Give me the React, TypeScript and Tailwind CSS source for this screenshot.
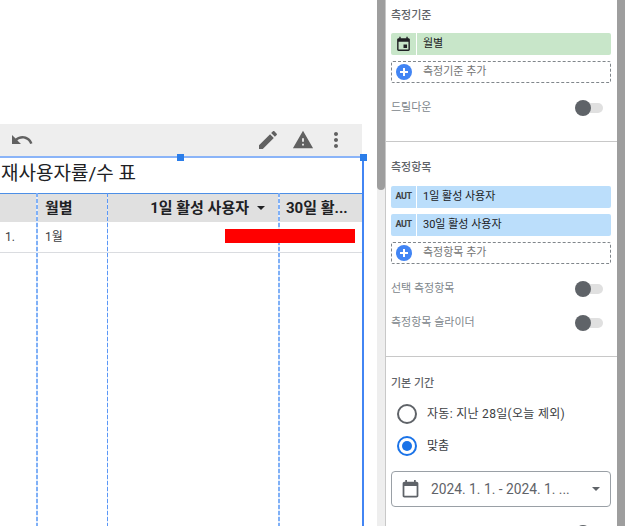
const FONT = "font-['Roboto','Noto_Sans_CJK_KR',sans-serif]";

function Icon({ d, size = 24, className = "" }: { d: string; size?: number; className?: string }) {
  return (
    <svg width={size} height={size} viewBox="0 0 24 24" className={"flex-none " + className} fill="currentColor">
      <path d={d} />
    </svg>
  );
}

const UNDO = "M12.5 8c-2.65 0-5.05.99-6.9 2.6L2 7v9h9l-3.62-3.62c1.39-1.16 3.16-1.88 5.12-1.88 3.54 0 6.55 2.31 7.6 5.5l2.37-.78C21.08 11.03 17.15 8 12.5 8z";
const EDIT = "M3 17.25V21h3.75L17.81 9.94l-3.75-3.75L3 17.25zM20.71 7.04c.39-.39.39-1.02 0-1.41l-2.34-2.34c-.39-.39-1.02-.39-1.41 0l-1.83 1.83 3.75 3.75 1.83-1.83z";
const WARN = "M1 21h22L12 2 1 21zm12-3h-2v-2h2v2zm0-4h-2v-4h2v4z";
const MORE = "M12 8c1.1 0 2-.9 2-2s-.9-2-2-2-2 .9-2 2 .9 2 2 2zm0 2c-1.1 0-2 .9-2 2s.9 2 2 2 2-.9 2-2-.9-2-2-2zm0 6c-1.1 0-2 .9-2 2s.9 2 2 2 2-.9 2-2-.9-2-2-2z";
const EVENT = "M17 12h-5v5h5v-5zM16 1v2H8V1H6v2H5c-1.11 0-1.99.9-1.99 2L3 19c0 1.1.89 2 2 2h14c1.1 0 2-.9 2-2V5c0-1.1-.9-2-2-2h-1V1h-2zm3 18H5V8h14v11z";
const CAL = "M19 3h-1V1h-2v2H8V1H6v2H5c-1.11 0-2 .9-2 2v14c0 1.1.89 2 2 2h14c1.1 0 2-.89 2-2V5c0-1.1-.9-2-2-2zm0 16H5V8h14v11z";

function Heading({ children, className = "" }: { children: string; className?: string }) {
  return <div className={"h-5 flex items-center px-[5px] text-[11px] font-medium text-[#5f6368] " + className}>{children}</div>;
}

function Chip({ bg, tag, icon, label, className = "" }: { bg: string; tag?: string; icon?: boolean; label: string; className?: string }) {
  return (
    <div className={"ml-[5px] mr-[6px] h-[22px] flex rounded-[2px] overflow-hidden " + bg + " " + className}>
      <div className="w-[26px] flex-none flex items-center justify-center border-r border-white">
        {icon ? (
          <Icon d={EVENT} size={17} className="text-[#202124]" />
        ) : (
          <span className="text-[9px] font-bold tracking-[-0.5px] text-[#3c4043]">{tag}</span>
        )}
      </div>
      <div className="pl-[6px] flex items-center text-[11px] text-[#202124]">{label}</div>
    </div>
  );
}

function AddRow({ label, className = "" }: { label: string; className?: string }) {
  return (
    <div className={"ml-[5px] mr-[6px] h-[22px] flex items-center border border-dashed border-[#80868b] rounded-[2px] " + className}>
      <div className="ml-[4px] w-4 h-4 rounded-full bg-[#4285f4] flex items-center justify-center relative">
        <div className="w-2 h-[2px] bg-white" />
        <div className="absolute w-[2px] h-2 bg-white" />
      </div>
      <span className="ml-[11px] text-[11px] text-[#757575]">{label}</span>
    </div>
  );
}

function ToggleRow({ label, className = "" }: { label: string; className?: string }) {
  return (
    <div className={"h-6 pl-[5px] pr-[14px] flex items-center justify-between text-[11px] text-[#80868b] " + className}>
      <span className="mt-[1px]">{label}</span>
      <Toggle />
    </div>
  );
}

function Toggle() {
  return (
    <div className="relative w-[28px] h-[16px] flex items-center">
      <div className="w-full h-[10px] ml-[2px] rounded-full bg-[#e0e0e0]" />
      <div className="absolute left-0 top-0 w-4 h-4 rounded-full bg-[#5f6368]" />
    </div>
  );
}

function Radio({ checked, children }: { checked?: boolean; children: React.ReactNode }) {
  return (
    <div className="h-8 pl-[11px] flex items-center">
      <div className={"w-5 h-5 rounded-full border-2 flex items-center justify-center " + (checked ? "border-[#1a73e8]" : "border-[#5f6368]")}>
        {checked && <div className="w-[10px] h-[10px] rounded-full bg-[#1a73e8]" />}
      </div>
      <div className="ml-[10px] text-[12px] text-[#3c4043]">{children}</div>
    </div>
  );
}

const DASH_WIDE = "absolute top-[35px] bottom-0 w-[2px] bg-[repeating-linear-gradient(to_bottom,#7fb0f7_0,#7fb0f7_4px,#e3edfd_4px,#e3edfd_6px)]";
const DASH_THIN = "absolute top-[35px] bottom-0 w-[1px] bg-[repeating-linear-gradient(to_bottom,#5a97f7_0,#5a97f7_4px,#dbe8fd_4px,#dbe8fd_6px)]";

function Table() {
  return (
    <div className="relative w-[364px] flex-1 border-t-2 border-t-[#8ab4f8] border-r-2 border-r-[#4285f4] bg-white">
      <div className="h-[35px] pl-[1px] pb-[2px] flex items-center text-[19px] text-[#202124] whitespace-nowrap">재사용자률/수 표</div>
      <div className="grid grid-cols-[37px_70px_171px_84px] h-[29px] bg-[#e0e0e0] border-t border-t-[#4d8fe6] text-[15px] font-bold text-[#202124]">
        <div />
        <div className="pl-2 flex items-center">월별</div>
        <div className="flex items-center justify-end pr-[13px]">
          <span>1일 활성 사용자</span>
          <span className="ml-[8px] w-0 h-0 border-x-[4px] border-x-transparent border-t-[4px] border-t-[#202124]" />
        </div>
        <div className="pl-2 flex items-center whitespace-nowrap overflow-hidden">30일 활...</div>
      </div>
      <div className="grid grid-cols-[37px_70px_171px_84px] h-[31px] border-b border-b-[#dadce0] text-[12px] text-[#3c4043]">
        <div className="pl-[5px] flex items-center">1.</div>
        <div className="pl-2 flex items-center">1월</div>
        <div />
        <div />
      </div>
      <div className={DASH_WIDE + " left-[36px]"} />
      <div className={DASH_THIN + " left-[107px]"} />
      <div className={DASH_WIDE + " left-[278px]"} />
      <div className="absolute left-[225px] top-[71px] w-[130px] h-[14px] bg-[#ff0000]" />
      <div className="absolute left-[177px] -top-[4px] w-[7px] h-[7px] bg-[#2b7de9]" />
      <div className="absolute left-[360px] -top-[4px] w-[7px] h-[7px] bg-[#2b7de9]" />
    </div>
  );
}

export default function App() {
  return (
    <div className={"w-[633px] h-[526px] flex overflow-hidden bg-white " + FONT}>
      <div className="w-[377px] flex-none pt-[124px] flex flex-col">
        <div className="w-[362px] h-[32px] bg-[#eeeeee] flex items-center pl-[10px] pr-[14px] text-[#616161]">
          <Icon d={UNDO} />
          <Icon d={EDIT} className="ml-auto" />
          <Icon d={WARN} size={22} className="ml-[12px]" />
          <Icon d={MORE} className="ml-[10px]" />
        </div>
        <Table />
      </div>

      <div className="w-[9px] flex-none bg-[#eeeeee] border-r border-r-[#c8c8c8]">
        <div className="w-[8px] h-[190px] bg-[#9e9e9e] rounded-b-[4px]" />
      </div>

      <div className="w-[231px] flex-none overflow-hidden">
        <Heading className="mt-[6px]">측정기준</Heading>
        <Chip bg="bg-[#c8e6c9]" icon label="월별" className="mt-[7px]" />
        <AddRow label="측정기준 추가" className="mt-[6px]" />
        <ToggleRow label="드릴다운" className="mt-[13px]" />
        <div className="mt-[21px] h-px bg-[#c8c8c8]" />
        <Heading className="mt-[16px]">측정항목</Heading>
        <Chip bg="bg-[#bbdefb]" tag="AUT" label="1일 활성 사용자" className="mt-[8px]" />
        <Chip bg="bg-[#bbdefb]" tag="AUT" label="30일 활성 사용자" className="mt-[6px]" />
        <AddRow label="측정항목 추가" className="mt-[6px]" />
        <ToggleRow label="선택 측정항목" className="mt-[13px]" />
        <ToggleRow label="측정항목 슬라이더" className="mt-[10px]" />
        <div className="mt-[21px] h-px bg-[#c8c8c8]" />
        <Heading className="mt-[17px]">기본 기간</Heading>
        <div className="mt-[4px]" />
        <Radio><span className="tracking-[0.3px]">자동: 지난 28일(오늘 제외)</span></Radio>
        <Radio checked>맞춤</Radio>
        <div className="mt-[9px] ml-[5px] mr-[6px] h-[36px] flex items-center border border-[#9aa0a6] rounded-[4px] pl-[8px] pr-[10px] text-[#5f6368]">
          <Icon d={CAL} size={21} />
          <span className="ml-[10px] text-[13.8px] whitespace-nowrap">2024. 1. 1. - 2024. 1. ...</span>
          <span className="ml-auto w-0 h-0 border-x-[4px] border-x-transparent border-t-[4px] border-t-[#5f6368]" />
        </div>
        <div className="mt-[18px] flex justify-end pr-[14px]">
          <Toggle />
        </div>
      </div>

      <div className="w-[8px] flex-none bg-[#9e9e9e]" />
      <div className="flex-1 bg-white" />
    </div>
  );
}
